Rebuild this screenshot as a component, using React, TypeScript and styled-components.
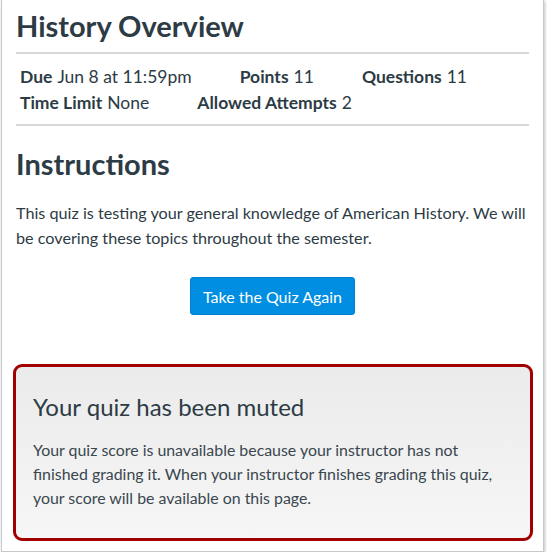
import React from 'react';
import styled, { createGlobalStyle } from 'styled-components';

const GlobalStyle = createGlobalStyle`
  html, body {
    margin: 0;
    padding: 0;
    background: #fff;
  }
  body {
    font-family: Lato, "Noto Sans", "Liberation Sans", sans-serif;
    color: #2d3b45;
  }
`;

const Frame = styled.div`
  box-sizing: border-box;
  width: 543px;
  height: 552px;
  margin-left: 1px;
  padding: 0 14px;
  border: 1px solid #c4c8cb;
  border-top: none;
  box-shadow: 1px 1px 3px rgba(0, 0, 0, 0.25);
  background: #fff;
`;

const Title = styled.h1`
  margin: 0;
  padding-top: 8px;
  height: 44px;
  font-size: 29px;
  font-weight: 700;
  line-height: 36px;
  color: #2d3b45;
`;

const Rule = styled.hr`
  margin: 0;
  border: none;
  height: 2px;
  background: #d6d8da;
`;

const Details = styled.div`
  display: flex;
  flex-wrap: wrap;
  column-gap: 48px;
  padding: 10px 0 8px 4px;
  font-size: 17.5px;
  line-height: 26px;
`;

const Detail = styled.div`
  white-space: nowrap;
`;

const Label = styled.span`
  font-weight: 700;
  margin-right: 5px;
`;

const Heading = styled.h2`
  margin: 0;
  padding-top: 20px;
  font-size: 29px;
  font-weight: 700;
  line-height: 36px;
`;

const Text = styled.p`
  margin: 18px 0 0;
  font-size: 16.2px;
  line-height: 25px;
`;

const Actions = styled.div`
  display: flex;
  justify-content: center;
  padding-top: 27px;
`;

const Button = styled.button`
  box-sizing: border-box;
  height: 38px;
  padding: 0 12px;
  border: 1px solid #0081cf;
  border-radius: 3px;
  background: #008ee2;
  color: #fff;
  font-family: inherit;
  font-size: 16px;
`;

const Notice = styled.div`
  box-sizing: border-box;
  margin: 49px -4px 0 -3px;
  height: 177px;
  padding: 25px 17px 0 17px;
  border: 3px solid #a20000;
  border-radius: 9px;
  background: linear-gradient(#ebebeb, #f6f6f6);
`;

const NoticeTitle = styled.h3`
  margin: 0;
  font-size: 24px;
  font-weight: 400;
  line-height: 30px;
  color: #2d3b45;
`;

const NoticeText = styled.p`
  margin: 16px 0 0;
  font-size: 15.9px;
  line-height: 24px;
  color: #3a474f;
`;

const details = [
  { label: 'Due', value: 'Jun 8 at 11:59pm' },
  { label: 'Points', value: '11' },
  { label: 'Questions', value: '11' },
  { label: 'Time Limit', value: 'None' },
  { label: 'Allowed Attempts', value: '2' },
];

export default function App() {
  return (
    <>
      <GlobalStyle />
      <Frame>
        <Title>History Overview</Title>
        <Rule />
        <Details>
          {details.map((d) => (
            <Detail key={d.label}>
              <Label>{d.label}</Label>
              {d.value}
            </Detail>
          ))}
        </Details>
        <Rule />
        <Heading>Instructions</Heading>
        <Text>
          This quiz is testing your general knowledge of American History. We will
          be covering these topics throughout the semester.
        </Text>
        <Actions>
          <Button>Take the Quiz Again</Button>
        </Actions>
        <Notice>
          <NoticeTitle>Your quiz has been muted</NoticeTitle>
          <NoticeText>
            Your quiz score is unavailable because your instructor has not finished
            grading it. When your instructor finishes grading this quiz, your score
            will be available on this page.
          </NoticeText>
        </Notice>
      </Frame>
    </>
  );
}
